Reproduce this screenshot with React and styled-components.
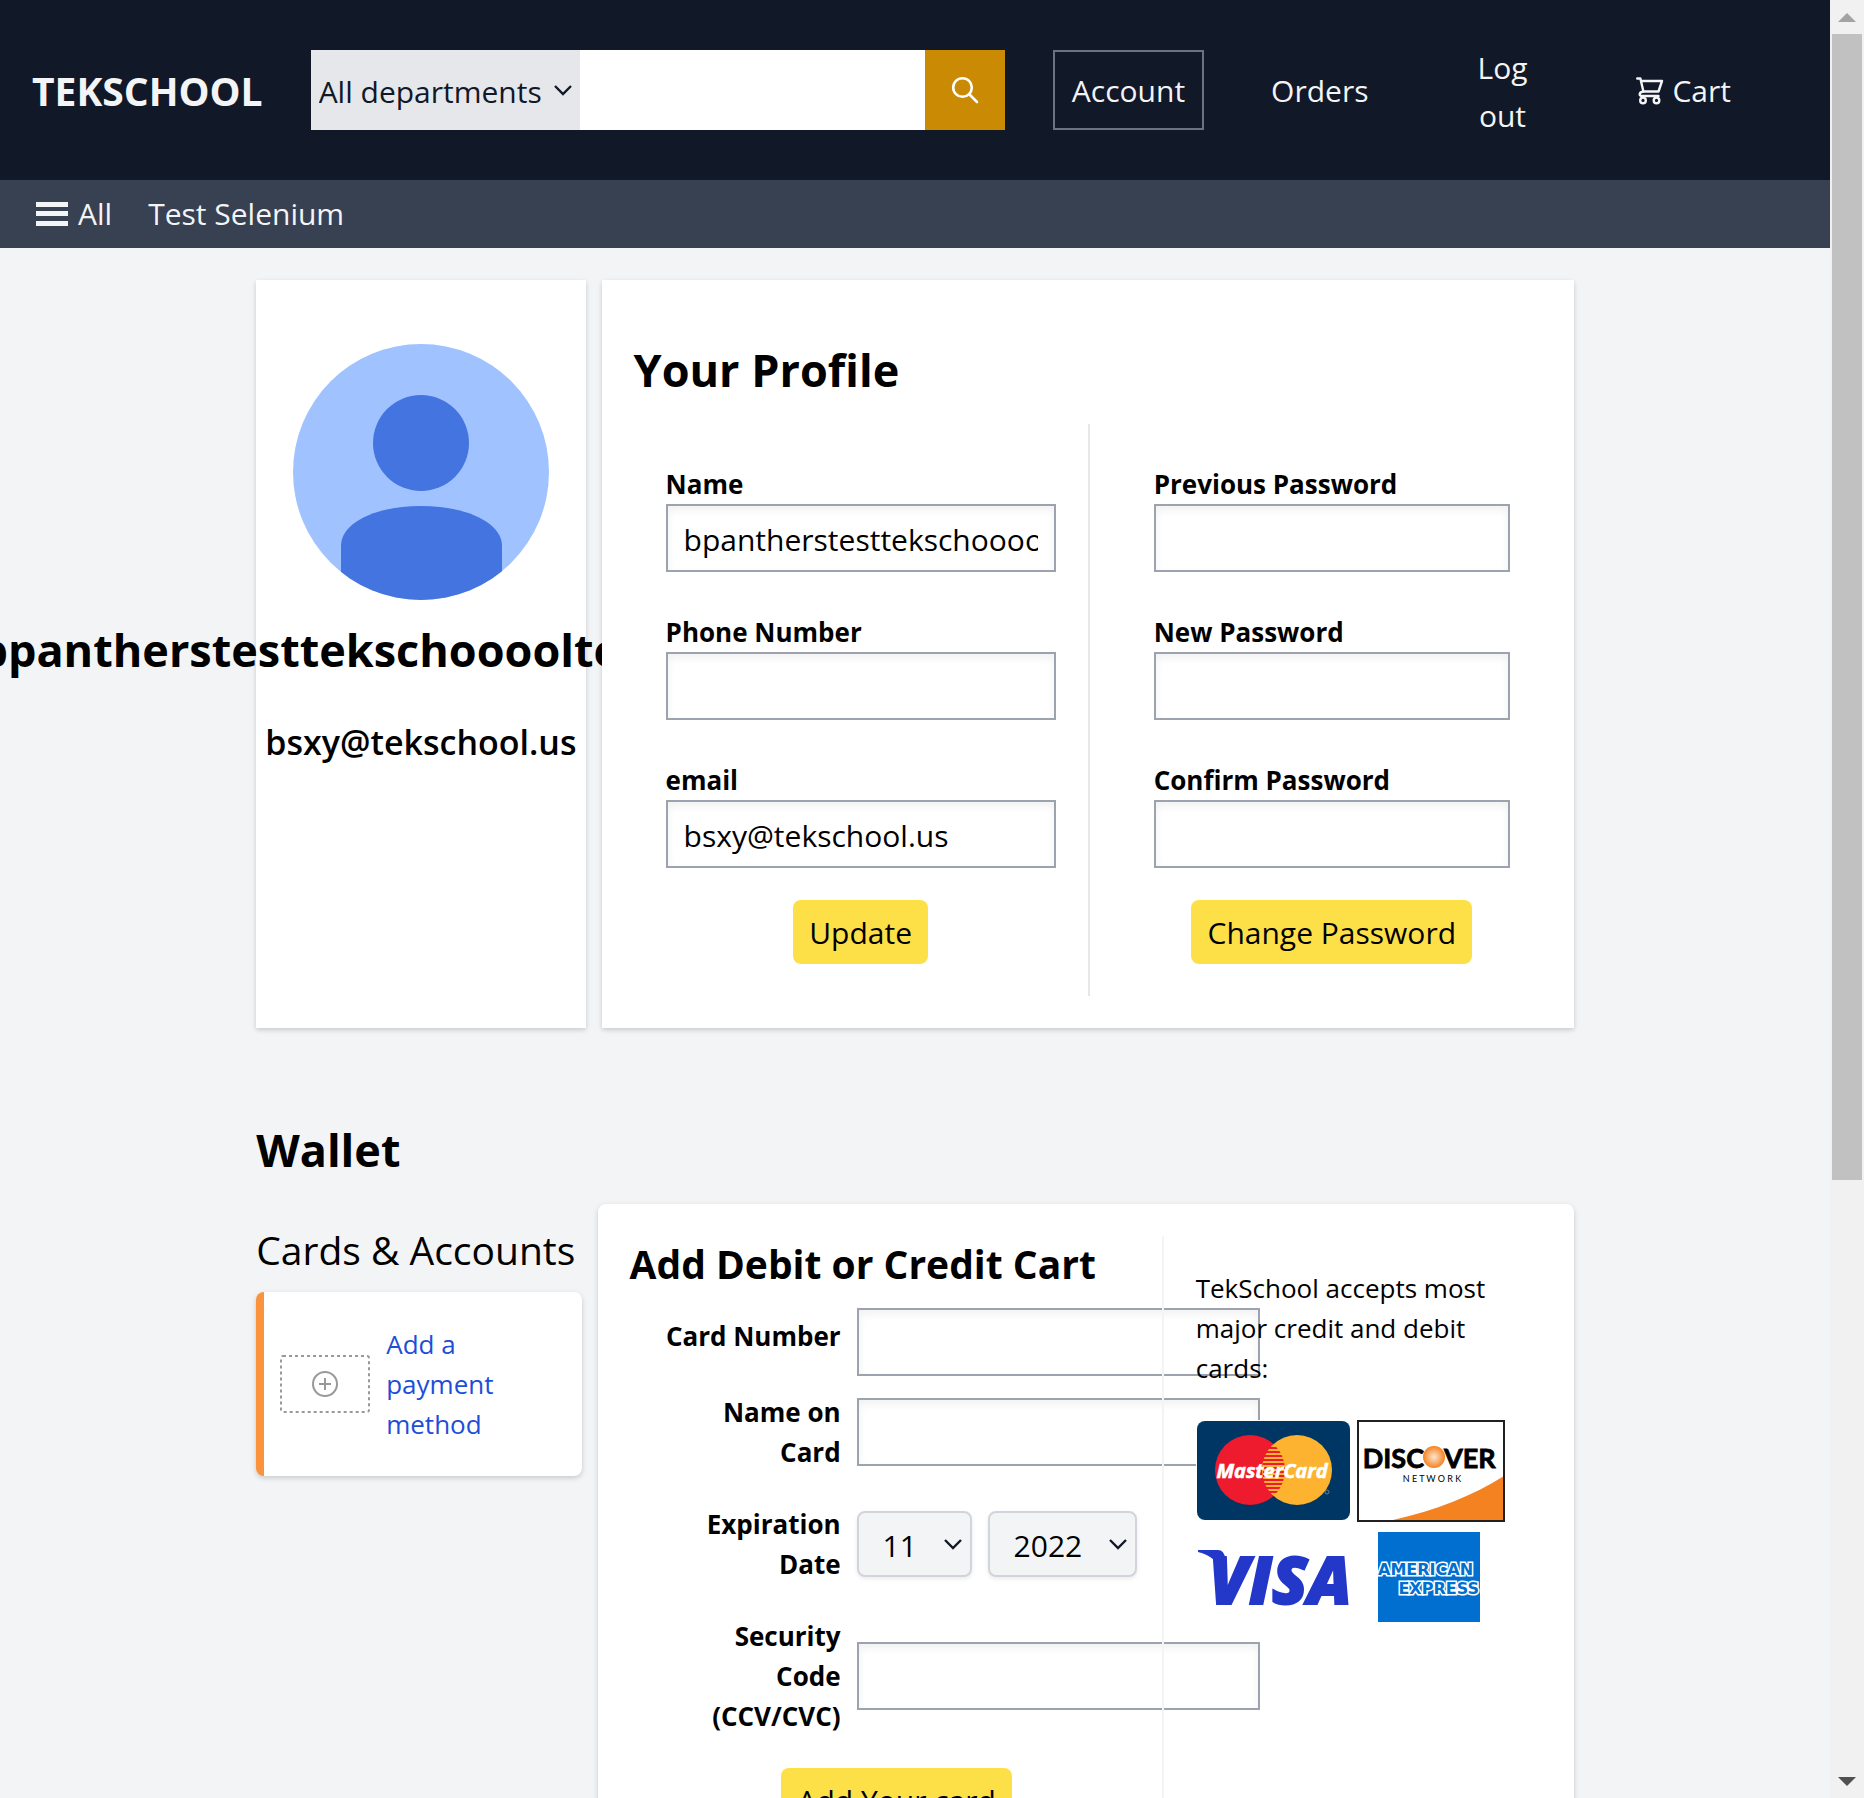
import React from 'react';
import styled, { createGlobalStyle, css } from 'styled-components';

const GlobalStyle = createGlobalStyle`
  *, *::before, *::after { box-sizing: border-box; }
  body {
    margin: 0;
    background: #f3f4f6;
    color: #000;
    font-family: 'Open Sans', 'Noto Sans', sans-serif;
    font-size: 30px;
    line-height: 48px;
  }
  h1, h2, h3, p { margin: 0; }
  button, input, select { font: inherit; color: inherit; margin: 0; }
  a { color: inherit; text-decoration: none; }
  svg { display: block; flex: none; }
`;

const smallShadow = '0 2px 6px rgba(0, 0, 0, 0.1), 0 2px 4px rgba(0, 0, 0, 0.08)';

const Viewport = styled.div`
  display: grid;
  grid-template-columns: minmax(0, 1fr) 34px;
  height: 100vh;
  overflow: hidden;
`;

const Page = styled.div`
  overflow: hidden;
`;

/* ---------- scroll bar ---------- */

const ScrollTrack = styled.div`
  display: flex;
  flex-direction: column;
  height: 100vh;
  padding: 0 2px;
  background: #f1f1f1;
`;

const ScrollArrow = styled.div`
  display: flex;
  align-items: center;
  justify-content: center;
  flex: 0 0 34px;
`;

const ScrollThumb = styled.div`
  flex: 53 1 0;
  background: #c1c1c1;
`;

const ScrollSpace = styled.div`
  flex: 27 1 0;
`;

/* ---------- header ---------- */

const TopBar = styled.header`
  display: flex;
  align-items: center;
  gap: 48px;
  height: 180px;
  padding: 0 80px 0 32px;
  background: #111827;
  color: #f3f4f6;
`;

const Brand = styled.a`
  padding-top: 2px;
  font-size: 39px;
  font-weight: 700;
  line-height: 56px;
`;

const Search = styled.form`
  display: flex;
  flex: 1;
  min-width: 0;
  height: 80px;
`;

const SelectWrap = styled.div`
  display: grid;
  align-items: center;
  > * { grid-area: 1 / 1; }
  > svg {
    justify-self: end;
    margin-right: ${(p) => p.$arrow}px;
    color: #111827;
    pointer-events: none;
  }
`;

const DepartmentSelect = styled.select`
  appearance: none;
  width: 269px;
  height: 80px;
  padding: 4px 0 0 8px;
  border: 0;
  border-radius: 0;
  background: #e5e7eb;
  color: #111827;
`;

const SearchInput = styled.input`
  flex: 1;
  min-width: 0;
  border: 0;
  padding: 0 16px;
  background: #fff;
  color: #111827;
`;

const SearchButton = styled.button`
  display: grid;
  place-items: center;
  width: 80px;
  border: 0;
  background: #ca8a04;
  color: #fff;
`;

const navItem = css`
  display: flex;
  align-items: center;
  justify-content: center;
  gap: 8px;
  height: 80px;
  padding: 2px 17px 0;
  border: 2px solid ${(p) => (p.$active ? '#6b7280' : 'transparent')};
  background: none;
  text-align: center;
`;

const NavLink = styled.a`
  ${navItem}
`;

const LogOutButton = styled.button`
  ${navItem}
  width: 134px;
  height: 112px;
  padding: 4px 30px 0;
`;

const SubBar = styled.nav`
  display: flex;
  align-items: center;
  gap: 36px;
  height: 68px;
  padding: 0 36px;
  background: #374151;
  color: #f3f4f6;
`;

const MenuButton = styled.button`
  display: flex;
  align-items: center;
  gap: 10px;
  padding: 0;
  border: 0;
  background: none;
`;

/* ---------- shared parts ---------- */

const Main = styled.main`
  width: 72%;
  margin: 32px auto 0;
`;

const Title = styled.h1`
  font-size: 45px;
  font-weight: 700;
  line-height: 64px;
  padding: ${(p) => p.$pad || '0'};
`;

const TextInput = styled.input`
  display: block;
  width: ${(p) => p.$width || '100%'};
  height: 68px;
  padding: 2px 16px 0;
  border: 2px solid #9ca3af;
  border-radius: 0;
  background: #fff;
  box-shadow: inset 0 4px 8px rgba(0, 0, 0, 0.06);
`;

const YellowButton = styled.button`
  display: block;
  height: 64px;
  margin: 32px auto 0;
  padding: 2px 16px 0;
  border: 0;
  border-radius: 8px;
  background: #fde047;
`;

const Label = styled.label`
  font-size: 26px;
  font-weight: 700;
  line-height: 40px;
`;

/* ---------- profile ---------- */

const ProfileRow = styled.section`
  display: flex;
  gap: 16px;
`;

const UserCard = styled.div`
  display: flex;
  flex: 0 0 25%;
  min-width: 0;
  flex-direction: column;
  align-items: center;
  padding-top: 64px;
  background: #fff;
  box-shadow: ${smallShadow};
`;

const UserName = styled(Title)`
  margin-top: 18px;
  white-space: nowrap;
`;

const UserEmail = styled.p`
  margin-top: 32px;
  font-size: 34px;
  font-weight: 600;
  line-height: 56px;
`;

const ProfileCard = styled.div`
  position: relative;
  flex: 1;
  min-width: 0;
  padding: 32px;
  background: #fff;
  box-shadow: ${smallShadow};
`;

const ProfileColumns = styled.div`
  display: grid;
  grid-template-columns: minmax(0, 228fr) minmax(0, 226fr);
`;

const ProfileForm = styled.form`
  padding: 40px 32px 32px ${(p) => (p.$divided ? 32 : 64)}px;
  border-right: ${(p) => (p.$divided ? '2px solid #e5e7eb' : '0')};
`;

const Fields = styled.div`
  display: grid;
  gap: 40px;
`;

const Field = styled.div`
  ${Label} {
    display: block;
  }
`;

/* ---------- wallet ---------- */

const Wallet = styled.section`
  margin-top: 90px;
`;

const WalletGrid = styled.div`
  display: grid;
  grid-template-columns: minmax(0, 1fr) minmax(0, 3fr);
  align-items: start;
  gap: 16px;
  margin-top: 22px;
`;

const Accounts = styled.div`
  padding-top: 18px;
`;

const SubTitle = styled.h2`
  font-size: 39px;
  font-weight: ${(p) => (p.$light ? 400 : 700)};
  line-height: 56px;
  white-space: nowrap;
`;

const AddMethod = styled.a`
  display: flex;
  align-items: center;
  gap: 16px;
  margin-top: 14px;
  padding: 32px 64px 32px 16px;
  border-left: 8px solid #fb923c;
  border-radius: 8px;
  background: #fff;
  box-shadow: ${smallShadow};
  color: #1d4ed8;
  font-size: 26px;
  line-height: 40px;
`;

const CardPanel = styled.div`
  display: grid;
  grid-template-columns: minmax(0, 534fr) minmax(0, 378fr);
  padding: 32px;
  border-radius: 8px;
  background: #fff;
  box-shadow: ${smallShadow};
`;

const CardForm = styled.form`
  min-width: 0;
  padding-bottom: 32px;
`;

const FormRow = styled.div`
  display: grid;
  grid-template-columns: 211px 1fr;
  align-items: ${(p) => (p.$top ? 'start' : 'center')};
  gap: 16px;
  margin-top: ${(p) => p.$space}px;
  ${Label} {
    padding: ${(p) => (p.$top ? 8 : 0)}px 0 0 20px;
    text-align: right;
    white-space: pre-line;
  }
`;

const Dates = styled.div`
  display: flex;
  gap: 16px;
`;

const DateSelect = styled.select`
  appearance: none;
  width: ${(p) => p.$width}px;
  height: 66px;
  padding: 4px 0 0 24px;
  border: 2px solid #d1d5db;
  border-radius: 8px;
  background: #f3f4f6;
  box-shadow: 0 2px 4px rgba(0, 0, 0, 0.08);
`;

const Accepted = styled.aside`
  position: relative;
  padding: 32px;
  border-left: 2px solid #f3f4f6;
  margin-left: -2px;
  font-size: 26px;
  line-height: 40px;
`;

const Logos = styled.div`
  display: grid;
  grid-template-columns: 1fr 1fr;
  place-items: center;
  gap: 10px 0;
  margin-top: 32px;
`;

/* ---------- drawings ---------- */

const Chevron = () => (
  <svg width="18" height="11" viewBox="0 0 18 11" fill="none" stroke="currentColor" strokeWidth="2.4">
    <path d="M1 1 L9 9 L17 1" />
  </svg>
);

const SearchIcon = () => (
  <svg width="28" height="28" viewBox="0 0 28 28" fill="none" stroke="currentColor" strokeWidth="2.6" strokeLinecap="round">
    <circle cx="11.5" cy="11.5" r="9.3" />
    <path d="M18.5 18.5 L26 26" />
  </svg>
);

const CartIcon = () => (
  <svg width="28" height="28" viewBox="0 0 28 28" fill="none" stroke="currentColor" strokeWidth="2.4" strokeLinecap="round" strokeLinejoin="round">
    <path d="M1.2 1.5 H4.4 L7.4 14.5 H22.5 L26 4 H5" />
    <path d="M7.4 14.5 C3 15 2.5 19 6 19 H22.5" />
    <circle cx="7" cy="23.4" r="2.8" />
    <circle cx="20.5" cy="23.4" r="2.8" />
  </svg>
);

const MenuIcon = () => (
  <svg width="32" height="24" viewBox="0 0 32 24" fill="currentColor">
    <rect y="0" width="32" height="5" />
    <rect y="9" width="32" height="5" />
    <rect y="19" width="32" height="5" />
  </svg>
);

const Avatar = () => (
  <svg width="256" height="256" viewBox="0 0 256 256" role="img" aria-label="User">
    <clipPath id="face"><circle cx="128" cy="128" r="128" /></clipPath>
    <g clipPath="url(#face)">
      <rect width="256" height="256" fill="#a0c2ff" />
      <circle cx="128" cy="99" r="48" fill="#4374e0" />
      <path d="M48 256 V202 C48 178 84 162 128 162 C172 162 209 178 209 202 V256 Z" fill="#4374e0" />
    </g>
  </svg>
);

const AddIcon = () => (
  <svg width="90" height="58" viewBox="0 0 90 58" fill="none" stroke="#999" strokeWidth="2">
    <rect x="1" y="1" width="88" height="56" rx="2" strokeDasharray="3 3" />
    <circle cx="45" cy="29" r="12" />
    <path d="M45 23 V35 M39 29 H51" />
  </svg>
);

const MasterCard = () => (
  <svg width="157" height="102" viewBox="0 0 157 102" role="img" aria-label="MasterCard">
    <rect width="155" height="102" fill="#fff" />
    <rect x="1" y="1" width="153" height="99" rx="8" fill="#003663" />
    <circle cx="54" cy="50" r="35" fill="#ee1b2e" />
    <circle cx="101" cy="50" r="35" fill="#fdb330" />
    <clipPath id="lens"><circle cx="54" cy="50" r="35" /></clipPath>
    <g clipPath="url(#lens)" fill="#ee1b2e">
      {[27, 31, 35, 39, 43, 47, 51, 55, 59, 63, 67, 71].map((y) => (
        <rect key={y} x="67" y={y} width="22" height="2" />
      ))}
    </g>
    <text x="76" y="58" textAnchor="middle" fontSize="20" fontWeight="700" fontStyle="italic" fill="#fff" stroke="#fff" strokeWidth="0.6">MasterCard</text>
    <circle cx="131" cy="72" r="2" fill="none" stroke="#6b7f80" />
  </svg>
);

const Discover = () => (
  <svg width="148" height="102" viewBox="0 0 148 102" role="img" aria-label="Discover Network">
    <defs>
      <radialGradient id="sun">
        <stop offset="0" stopColor="#fde6d2" />
        <stop offset="1" stopColor="#f58220" />
      </radialGradient>
    </defs>
    <rect x="1" y="1" width="146" height="100" fill="#fff" />
    <path d="M36 100 C80 90 115 76 147 56 V100 Z" fill="#f58220" />
    <rect x="1" y="1" width="146" height="100" fill="none" stroke="#231f20" strokeWidth="2" />
    <g fontFamily="Lato, sans-serif" fontSize="27" fontWeight="700" fill="#000" stroke="#000" strokeWidth="0.8">
      <text x="67" y="48" textAnchor="end">DISC</text>
      <text x="87" y="48">VER</text>
    </g>
    <circle cx="77" cy="37" r="11" fill="url(#sun)" />
    <text x="75" y="62" textAnchor="middle" fontFamily="Lato, sans-serif" fontSize="9" fill="#000">N E T W O R K</text>
  </svg>
);

const Visa = () => (
  <svg width="156" height="62" viewBox="0 0 156 62" role="img" aria-label="Visa">
    <path d="M2 4 H22 Q28 4 29 12 L31 30 Q20 10 2 6 Z" fill="#2337c9" />
    <text x="13" y="58" fontSize="65" fontWeight="800" fontStyle="italic" fill="#2337c9" stroke="#2337c9" strokeWidth="2">VISA</text>
  </svg>
);

const Amex = () => (
  <svg width="108" height="90" viewBox="0 0 108 90" role="img" aria-label="American Express">
    <rect x="1" width="102" height="90" fill="#016fd0" />
    <g fontFamily="'DejaVu Sans', sans-serif" fontSize="16" fontWeight="700" fill="#016fd0" stroke="#fff" strokeWidth="3" paintOrder="stroke">
      <text x="1" y="43">AMERICAN</text>
      <text x="102" y="62" textAnchor="end">EXPRESS</text>
    </g>
  </svg>
);

const Triangle = ({ down }) => (
  <svg width="18" height="9" viewBox="0 0 18 9" fill={down ? '#505050' : '#a3a3a3'}>
    <path d={down ? 'M0 0 H18 L9 9 Z' : 'M0 9 H18 L9 0 Z'} />
  </svg>
);

/* ---------- page ---------- */

const userName = 'bpantherstesttekschooooltekschooolst';
const userEmail = 'bsxy@tekschool.us';

const profileFields = [
  { id: 'name', label: 'Name', type: 'text', value: userName },
  { id: 'phone', label: 'Phone Number', type: 'tel', value: '' },
  { id: 'email', label: 'email', type: 'email', value: userEmail },
];

const passwordFields = [
  { id: 'previous', label: 'Previous Password', type: 'password', value: '' },
  { id: 'new', label: 'New Password', type: 'password', value: '' },
  { id: 'confirm', label: 'Confirm Password', type: 'password', value: '' },
];

const FieldList = ({ fields }) => (
  <Fields>
    {fields.map((f) => (
      <Field key={f.id}>
        <Label htmlFor={f.id}>{f.label}</Label>
        <TextInput id={f.id} type={f.type} defaultValue={f.value} />
      </Field>
    ))}
  </Fields>
);

export default function App() {
  return (
    <Viewport>
      <GlobalStyle />
      <Page>
        <TopBar>
          <Brand href="#home">TEKSCHOOL</Brand>
          <Search>
            <SelectWrap $arrow={8}>
              <DepartmentSelect aria-label="Department">
                <option>All departments</option>
              </DepartmentSelect>
              <Chevron />
            </SelectWrap>
            <SearchInput type="search" aria-label="Search" />
            <SearchButton type="button" aria-label="Search">
              <SearchIcon />
            </SearchButton>
          </Search>
          <NavLink href="#account" $active>Account</NavLink>
          <NavLink href="#orders">Orders</NavLink>
          <LogOutButton type="button">Log out</LogOutButton>
          <NavLink href="#cart"><CartIcon />Cart</NavLink>
        </TopBar>
        <SubBar>
          <MenuButton type="button"><MenuIcon />All</MenuButton>
          <a href="#selenium">Test Selenium</a>
        </SubBar>

        <Main>
          <ProfileRow>
            <UserCard>
              <Avatar />
              <UserName as="h2">{userName}</UserName>
              <UserEmail>{userEmail}</UserEmail>
            </UserCard>
            <ProfileCard>
              <Title $pad="26px 0 22px">Your Profile</Title>
              <ProfileColumns>
                <ProfileForm $divided>
                  <FieldList fields={profileFields} />
                  <YellowButton type="button">Update</YellowButton>
                </ProfileForm>
                <ProfileForm>
                  <FieldList fields={passwordFields} />
                  <YellowButton type="button">Change Password</YellowButton>
                </ProfileForm>
              </ProfileColumns>
            </ProfileCard>
          </ProfileRow>

          <Wallet>
            <Title>Wallet</Title>
            <WalletGrid>
              <Accounts>
                <SubTitle $light>Cards &amp; Accounts</SubTitle>
                <AddMethod href="#add">
                  <AddIcon />
                  <span>Add a payment method</span>
                </AddMethod>
              </Accounts>
              <CardPanel>
                <CardForm>
                  <SubTitle>Add Debit or Credit Cart</SubTitle>
                  <FormRow $space={16} $top>
                    <Label htmlFor="number">Card Number</Label>
                    <TextInput id="number" $width="403px" />
                  </FormRow>
                  <FormRow $space={16}>
                    <Label htmlFor="holder">{'Name on\nCard'}</Label>
                    <TextInput id="holder" $width="403px" />
                  </FormRow>
                  <FormRow $space={32}>
                    <Label htmlFor="month">{'Expiration\nDate'}</Label>
                    <Dates>
                      <SelectWrap $arrow={10}>
                        <DateSelect id="month" $width={115}><option>11</option></DateSelect>
                        <Chevron />
                      </SelectWrap>
                      <SelectWrap $arrow={10}>
                        <DateSelect aria-label="Year" $width={149}><option>2022</option></DateSelect>
                        <Chevron />
                      </SelectWrap>
                    </Dates>
                  </FormRow>
                  <FormRow $space={32}>
                    <Label htmlFor="code">{'Security\nCode\n(CCV/CVC)'}</Label>
                    <TextInput id="code" $width="403px" />
                  </FormRow>
                  <YellowButton type="button">Add Your card</YellowButton>
                </CardForm>
                <Accepted>
                  <p>TekSchool accepts most major credit and debit cards:</p>
                  <Logos>
                    <MasterCard />
                    <Discover />
                    <Visa />
                    <Amex />
                  </Logos>
                </Accepted>
              </CardPanel>
            </WalletGrid>
          </Wallet>
        </Main>
      </Page>
      <ScrollTrack aria-hidden="true">
        <ScrollArrow><Triangle /></ScrollArrow>
        <ScrollThumb />
        <ScrollSpace />
        <ScrollArrow><Triangle down /></ScrollArrow>
      </ScrollTrack>
    </Viewport>
  );
}
